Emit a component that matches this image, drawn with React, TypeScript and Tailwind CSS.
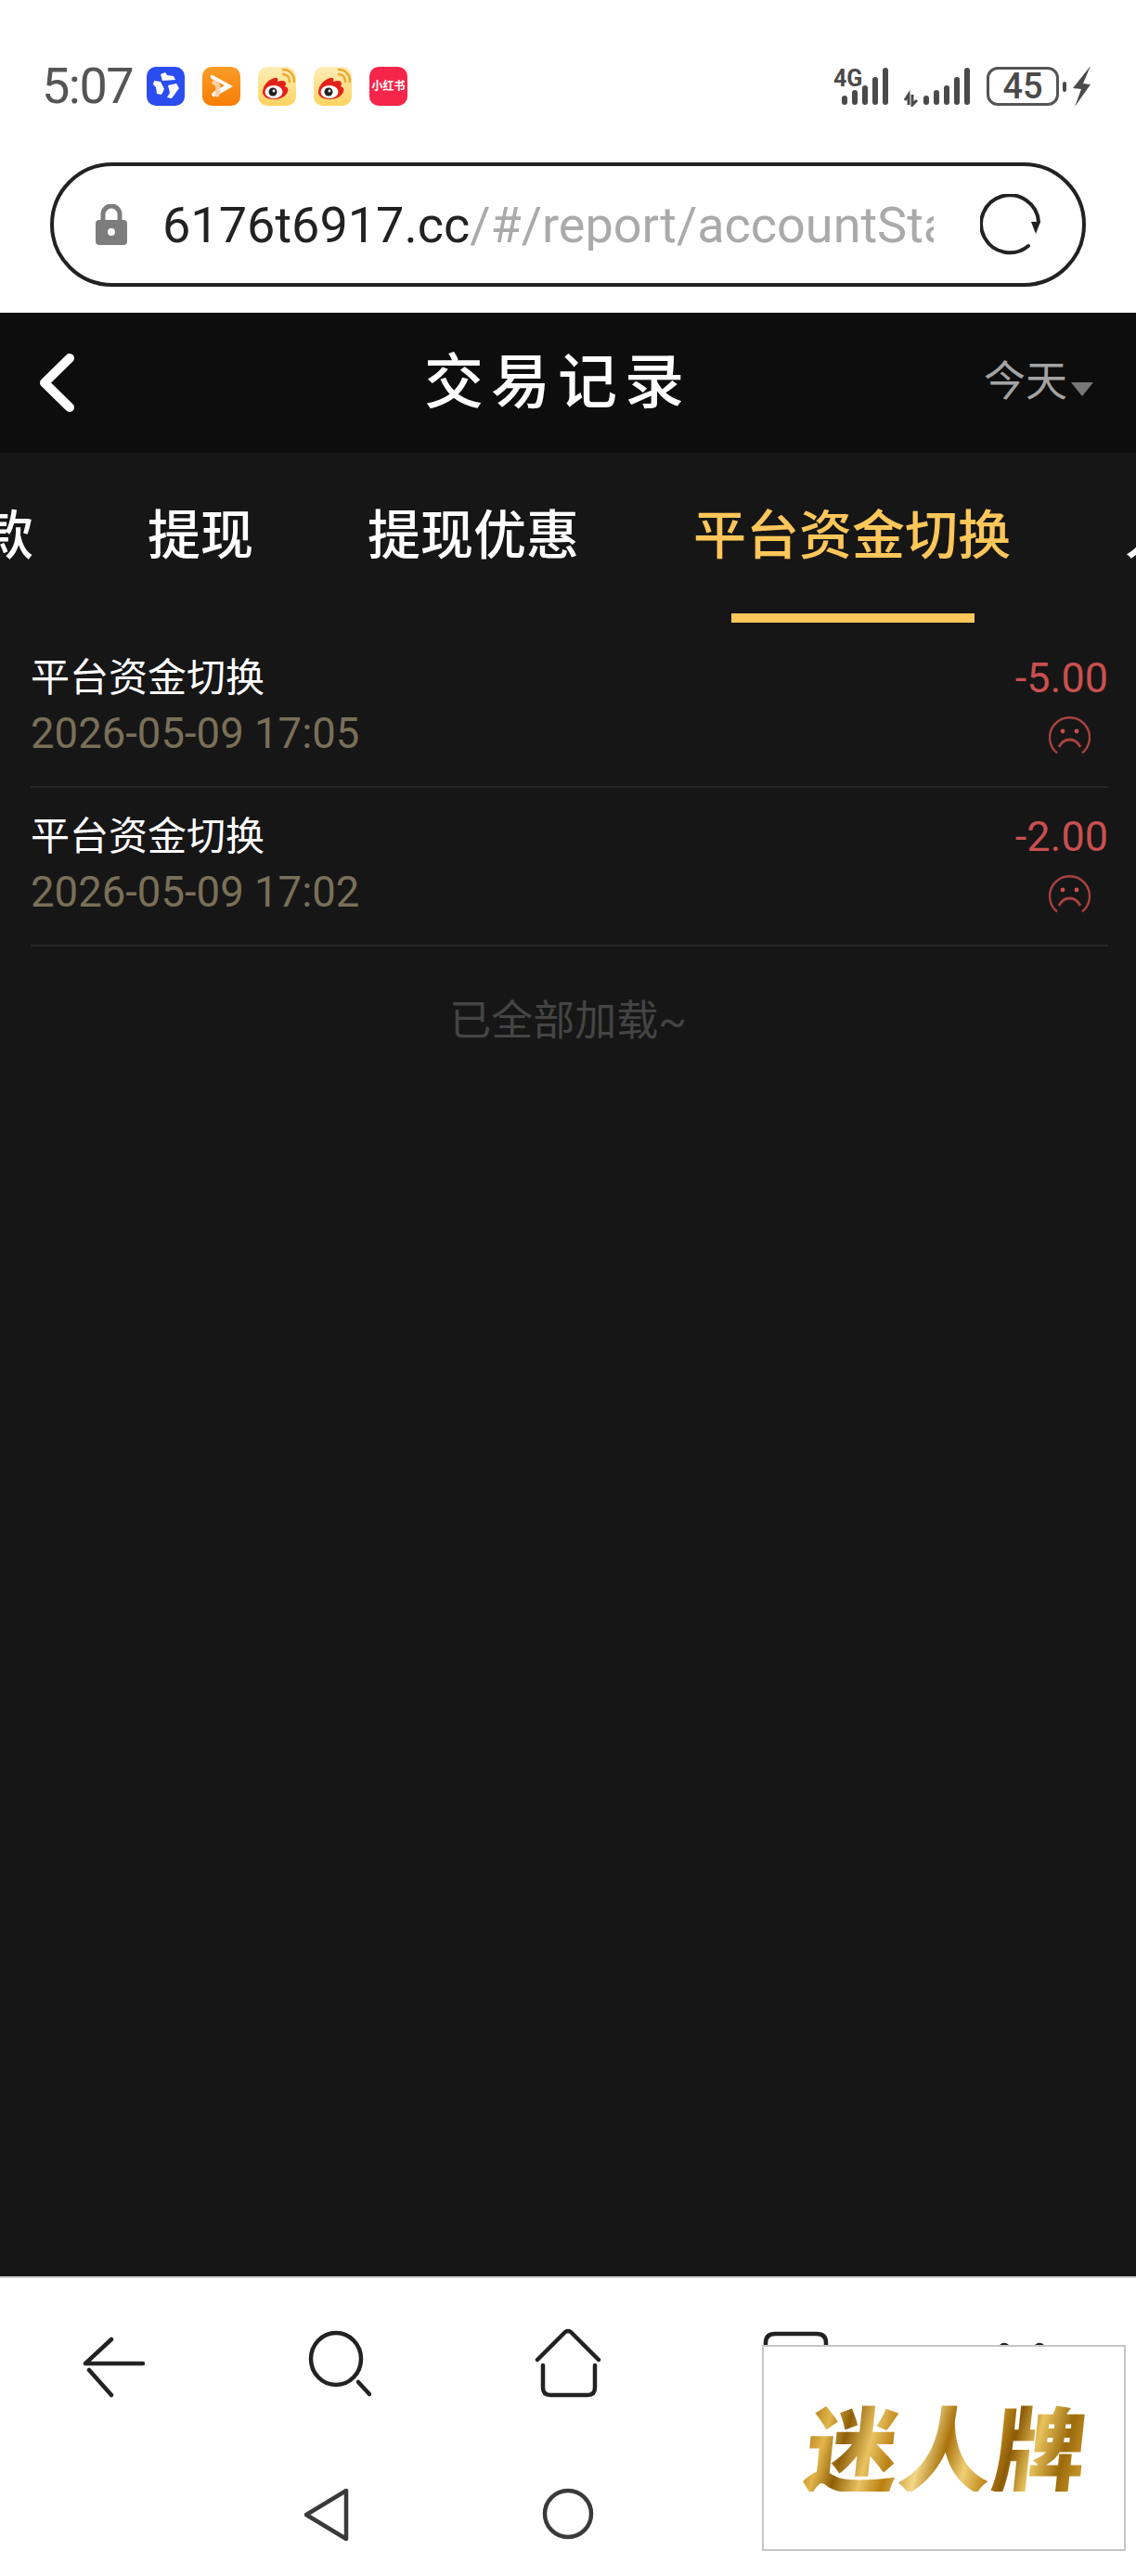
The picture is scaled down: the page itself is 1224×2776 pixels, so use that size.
const tabs = ["存款", "提现", "提现优惠", "平台资金切换", "人工存款"];

const records = [
  { time: "2026-05-09 17:05", amount: "-5.00" },
  { time: "2026-05-09 17:02", amount: "-2.00" },
];

function Weibo() {
  return (
    <svg viewBox="0 0 41 42" className="w-[41px] h-[42px]">
      <defs>
        <linearGradient id="wb" x1="0" y1="0" x2="0" y2="1">
          <stop offset="0" stopColor="#fdeeb8" />
          <stop offset="1" stopColor="#fdd25f" />
        </linearGradient>
      </defs>
      <rect width="41" height="42" rx="10" fill="url(#wb)" />
      <path d="M5 27c0-7 7-14 13-15 3-1 4 1 3 4 5-2 9-1 9 2 0 2-1 2-1 3 3 1 4 3 3 6-2 5-8 8-15 8-7 0-12-3-12-8z" fill="#e2231a" />
      <ellipse cx="17" cy="27" rx="9.5" ry="7" fill="#fff" />
      <circle cx="16" cy="27" r="4.5" fill="#222" />
      <circle cx="17" cy="26" r="1.4" fill="#fff" />
      <path d="M27 8c4 0 7 3 7 8M27 3c7 0 12 5 12 13" fill="none" stroke="#eda72b" strokeWidth="2.4" strokeLinecap="round" />
    </svg>
  );
}

function Bars({ left }: { left: number }) {
  const tops = [30, 24, 19, 10, 0];
  return (
    <>
      {tops.map((t, i) => (
        <rect key={i} x={left + i * 11} y={t} width="6" height={40 - t} rx="3" fill="#4a4a4a" />
      ))}
    </>
  );
}

function Frown() {
  return (
    <svg viewBox="0 0 45 44" className="w-[45px] h-[44px]" fill="none" stroke="#a8423f" strokeWidth="2.4">
      <path d="M9 41.5A21.5 21.5 0 1 1 36 41.5" />
      <circle cx="15" cy="18" r="2.4" fill="#c9504f" stroke="none" />
      <circle cx="30" cy="18" r="2.4" fill="#c9504f" stroke="none" />
      <path d="M11 35c3-6 7-8 11.500-8s8.500 2 11.500 8" strokeWidth="3" />
    </svg>
  );
}

export default function App() {
  return (
    <div className="relative flex flex-col w-[1224px] h-[2776px] overflow-hidden bg-[#161616] font-['Roboto','Noto_Sans_CJK_SC',sans-serif]">
      {/* browser chrome */}
      <div className="h-[337px] shrink-0 bg-white pt-[71px]">
        <div className="flex items-center h-[44px] pl-[45px]">
          <span className="w-[113px] text-[54px] leading-none text-[#555555] tracking-[-1.500px]">5:07</span>
          <div className="flex gap-[19px]">
            <svg viewBox="0 0 41 42" className="w-[41px] h-[42px]">
              <rect width="41" height="42" rx="10" fill="#2b4df0" />
              <path d="M15 8l5-2 2 3 7 1 2 4-14 1z M8 15l7 1 4 8-3 6-5-1-1-7-3-3z M23 20l9-2 3 5-8 11-5-1 3-5z" fill="#fff" />
            </svg>
            <svg viewBox="0 0 41 42" className="w-[41px] h-[42px]">
              <defs>
                <linearGradient id="or" x1="0" y1="0" x2="0" y2="1">
                  <stop offset="0" stopColor="#fb9d28" />
                  <stop offset="1" stopColor="#f77d05" />
                </linearGradient>
              </defs>
              <rect width="41" height="42" rx="10" fill="url(#or)" />
              <path d="M11 9l22 12-19 11c-4 1-5-3-2-5l12-7-14-7c-2-2-1-5 1-4z" fill="#fff" />
              <path d="M13 17c4 1 5 5 3 13" fill="none" stroke="#fbd0a6" strokeWidth="5" strokeLinecap="round" />
            </svg>
            <Weibo />
            <Weibo />
            <div className="flex items-center justify-center w-[41px] h-[42px] rounded-[10px] bg-[#f5264a] text-[12px] font-bold text-white leading-none whitespace-nowrap">
              小红书
            </div>
          </div>
          {/* signal and battery */}
          <svg viewBox="0 0 160 44" className="ml-[459px] w-[160px] h-[44px] shrink-0">
            <text x="0" y="22" fontSize="25" fontWeight="700" fill="#4a4a4a" fontFamily="Roboto">4G</text>
            <g transform="translate(0,2)">
              <Bars left={9} />
              <Bars left={97} />
            </g>
            <path d="M77 37l4-6v11M85 31v11l5-5" fill="none" stroke="#4a4a4a" strokeWidth="3" />
          </svg>
          <div className="ml-[5px] flex items-center justify-center w-[78px] h-[42px] rounded-[12px] border-[3px] border-[#555555] text-[38px] font-medium leading-none text-[#4a4a4a]">
            45
          </div>
          <div className="ml-[4px] w-[4px] h-[11px] rounded-sm bg-[#4a4a4a]" />
          <svg viewBox="0 0 20 44" className="ml-[7px] w-[20px] h-[44px]">
            <path d="M19 0L0 24l9 1L2 44l17-24-8-1z" fill="#4a4a4a" />
          </svg>
        </div>

        <div className="flex items-center mt-[60px] mx-[54px] h-[134px] rounded-full border-4 border-[#222222] pl-[45px]">
          <svg viewBox="0 0 34 44" className="w-[34px] h-[44px] shrink-0">
            <path d="M8 19v-8a9 9 0 0 1 18 0v8" fill="none" stroke="#7d7d7d" strokeWidth="5" />
            <rect y="17" width="34" height="27" rx="4" fill="#7d7d7d" />
            <circle cx="17" cy="30" r="4" fill="#fff" />
          </svg>
          <div className="ml-[38px] mt-[2px] w-[831px] overflow-hidden whitespace-nowrap text-[54px] leading-none text-[#aaaaaa]">
            <span className="text-[#222222]">6176t6917.cc</span>/#/report/accountStatement
          </div>
          <svg viewBox="0 0 66 66" className="ml-[50px] w-[66px] h-[66px] shrink-0" fill="none">
            <path d="M52 56A31 31 0 1 1 63 30" stroke="#222222" strokeWidth="4" strokeLinecap="round" />
            <path d="M55 30h10l-5 13z" fill="#222222" />
          </svg>
        </div>
      </div>

      {/* header */}
      <div className="flex items-center h-[151px] shrink-0 bg-[#0d0d0d] pl-[42px] pr-[46px] text-white">
        <svg viewBox="0 0 39 65" className="w-[39px] h-[65px] shrink-0" fill="none">
          <path d="M33 6L6 32.500L33 59" stroke="#ffffff" strokeWidth="10" strokeLinecap="round" strokeLinejoin="round" />
        </svg>
        <span className="ml-[376px] text-[64px] leading-none tracking-[8px] font-medium">交易记录</span>
        <div className="ml-auto flex items-center text-[#a3a3a3]">
          <span className="mb-[2px] text-[45px] leading-none">今天</span>
          <span className="ml-[4px] mt-[14px] w-0 h-0 border-x-[12.500px] border-t-[15px] border-x-transparent border-t-[#777777]" />
        </div>
      </div>

      {/* tabs */}
      <div className="relative h-[190px] shrink-0 overflow-hidden">
        <div className="flex gap-[123px] ml-[-78px] pt-[58px] whitespace-nowrap text-[57px] leading-[64px] text-white font-medium">
          {tabs.map((tab) => (
            <span key={tab} className={tab === "平台资金切换" ? "text-[#ffc65a]" : ""}>
              {tab}
            </span>
          ))}
        </div>
        <div className="absolute left-[788px] top-[173px] w-[262px] h-[10px] bg-[#ffc65a]" />
      </div>

      {/* records */}
      <div className="ml-[33px] mr-[30px]">
        {records.map((r) => (
          <div key={r.time} className="flex justify-between h-[171px] border-b-2 border-[#262626] pt-[28px]">
            <div>
              <div className="text-[42px] leading-[50px] text-white">平台资金切换</div>
              <div className="mt-[9px] text-[45.500px] leading-[52px] text-[#7a6f58]">{r.time}</div>
            </div>
            <div className="flex flex-col items-end">
              <div className="text-[45px] leading-[50px] text-[#c9504f]">{r.amount}</div>
              <div className="mt-[14px] mr-[19px]">
                <Frown />
              </div>
            </div>
          </div>
        ))}
      </div>
      <div className="mt-[55px] text-center text-[45px] leading-[52px] text-[#444444]">已全部加载~</div>

      {/* browser toolbar */}
      <div className="mt-auto h-[323px] shrink-0 bg-white border-t-2 border-[#cccccc]">
        <svg viewBox="0 0 1224 323" className="w-[1224px] h-[323px]" fill="none" strokeLinecap="round" strokeLinejoin="round">
          <g stroke="#222222" strokeWidth="4.500">
            <path d="M92 92h62M120 66L92 92M96 99l24 27" />
            <ellipse cx="362" cy="87" rx="27" ry="28" />
            <path d="M386 112l12 13" />
            <path d="M579 88l30-30q3-2 6 0l30 30M585 94v24q0 8 8 8h40q8 0 8-8v-24" />
            <path d="M825 90V70q0-10 10-10h45q10 0 10 10v20" />
            <circle cx="1082" cy="76" r="4" fill="#222222" />
            <circle cx="1120" cy="76" r="4" fill="#222222" />
          </g>
          <g stroke="#3a3a3a" strokeWidth="4.500">
            <path d="M330 255l43-26v52z" />
            <circle cx="612" cy="254" r="25" />
          </g>
        </svg>
      </div>

      {/* floating ad */}
      <div className="absolute left-[821px] top-[2527px] flex items-center justify-center w-[392px] h-[222px] bg-white border-2 border-[#c6c6c6]">
        <span className="ml-[6px] mb-[6px] -skew-x-6 text-[100px] leading-none font-black tracking-[1px] font-['Noto_Sans_CJK_SC',sans-serif] text-transparent bg-clip-text bg-[linear-gradient(100deg,#a8750f_0%,#e2b64a_8%,#8f5e08_15%,#e9c362_24%,#b97f10_32%,#f3d889_42%,#a9720c_50%,#f0cf74_58%,#c08a1c_66%,#8b5a06_72%,#e8c35c_80%,#9b6a0b_90%,#d4a233_100%)]">
          迷人牌
        </span>
      </div>
    </div>
  );
}
